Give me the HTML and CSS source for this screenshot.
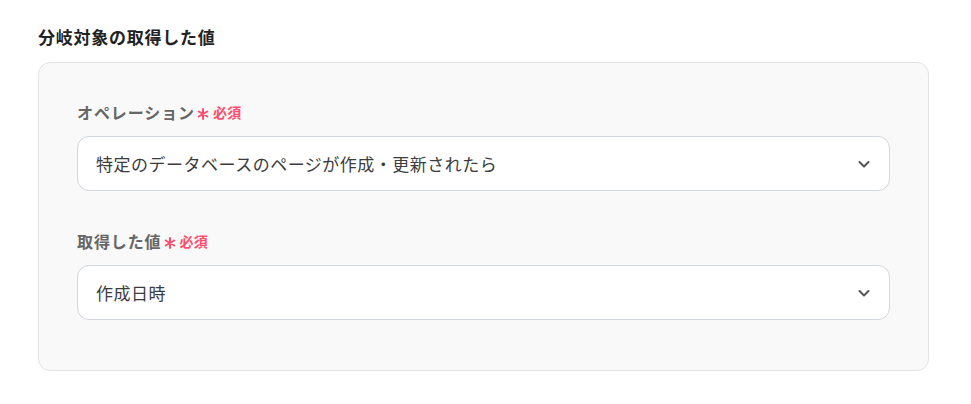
FILE: index.html
```html
<!DOCTYPE html>
<html lang="ja">
<head>
<meta charset="UTF-8" />
<title>分岐対象の取得した値</title>
<link rel="stylesheet" href="styles.css">
</head>
<body>
<section class="branch">
<h2 class="branch-title">分岐対象の取得した値</h2>
<div class="card">
<div class="field">
<div class="field-label">オペレーション<svg class="req-mark" width="12" height="12" viewBox="0 0 12 12"><path d="M6 1 V11 M1.7 3.5 L10.3 8.5 M1.7 8.5 L10.3 3.5" stroke="#ff4d6d" stroke-width="2" stroke-linecap="round"/></svg><span class="req">必須</span></div>
<div class="select">
<span class="select-value">特定のデータベースのページが作成・更新されたら</span>
<svg class="chevron" width="14" height="14" viewBox="0 0 14 14"><path d="M2.5 5 L7 9.5 L11.5 5" fill="none" stroke="#555" stroke-width="2" stroke-linecap="round" stroke-linejoin="round"/></svg>
</div>
</div>
<div class="field">
<div class="field-label">取得した値<svg class="req-mark" width="12" height="12" viewBox="0 0 12 12"><path d="M6 1 V11 M1.7 3.5 L10.3 8.5 M1.7 8.5 L10.3 3.5" stroke="#ff4d6d" stroke-width="2" stroke-linecap="round"/></svg><span class="req">必須</span></div>
<div class="select">
<span class="select-value">作成日時</span>
<svg class="chevron" width="14" height="14" viewBox="0 0 14 14"><path d="M2.5 5 L7 9.5 L11.5 5" fill="none" stroke="#555" stroke-width="2" stroke-linecap="round" stroke-linejoin="round"/></svg>
</div>
</div>
</div>
</section>
</body>
</html>
```

FILE: styles.css
```css
* {
box-sizing: border-box;
}
body {
margin: 0;
background: #fff;
font-family: "Noto Sans CJK JP", "Noto Sans", sans-serif;
color: #333;
}
.branch {
padding: 23px 42px 0 38px;
}
.branch-title {
margin: 0 0 11px;
font-size: 17px;
letter-spacing: 0.75px;
font-weight: 700;
line-height: 28px;
color: #222;
}
.card {
background: #f9f9f9;
border: 1px solid #e3e3e3;
border-radius: 12px;
padding: 37px 38px 50px;
display: flex;
flex-direction: column;
gap: 38px;
}
.field-label {
display: flex;
align-items: center;
font-size: 16px;
letter-spacing: 0.9px;
font-weight: 700;
color: #666;
line-height: 24px;
margin-bottom: 12px;
}
.req-mark {
display: block;
margin: 4px 4px 0 2px;
}
.req {
color: #ff4d6d;
font-size: 14px;
letter-spacing: 0.3px;
font-weight: 700;
}
.select {
height: 55px;
background: #fff;
border: 1px solid #d2d6dd;
border-radius: 12px;
display: flex;
align-items: center;
justify-content: space-between;
padding: 0 18px 0 18px;
}
.select-value {
font-size: 17px;
letter-spacing: 0.5px;
color: #3c3c3c;
}
.chevron {
display: block;
}
```
